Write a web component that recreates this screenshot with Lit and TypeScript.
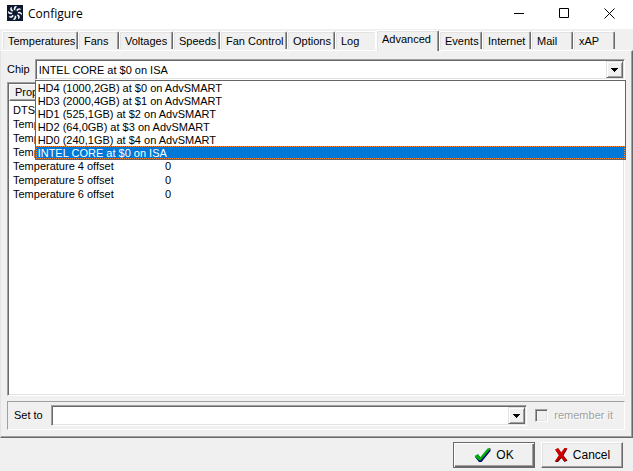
import { LitElement, html, css, svg, nothing } from "lit";
import { customElement, property, state } from "lit/decorators.js";
import { classMap } from "lit/directives/class-map.js";

const TABS: Array<[string, number]> = [
  ["Temperatures", 76],
  ["Fans", 41],
  ["Voltages", 54],
  ["Speeds", 47],
  ["Fan Control", 67],
  ["Options", 48],
  ["Log", 41],
  ["Advanced", 63],
  ["Events", 43],
  ["Internet", 49],
  ["Mail", 42],
  ["xAP", 42],
];

const CHIPS = [
  "HD4 (1000,2GB) at $0 on AdvSMART",
  "HD3 (2000,4GB) at $1 on AdvSMART",
  "HD1 (525,1GB) at $2 on AdvSMART",
  "HD2 (64,0GB) at $3 on AdvSMART",
  "HD0 (240,1GB) at $4 on AdvSMART",
  "INTEL CORE at $0 on ISA",
];

const ROWS: Array<[string, string]> = [
  ["DTS", ""],
  ["Temp", ""],
  ["Temp", ""],
  ["Temp", ""],
  ["Temperature 4 offset", "0"],
  ["Temperature 5 offset", "0"],
  ["Temperature 6 offset", "0"],
];

/** Sunken drop-down with a classic raised arrow button. */
@customElement("combo-box")
export class ComboBox extends LitElement {
  @property() label = "";
  @property({ attribute: false }) options: string[] = [];
  @property() value = "";
  @property({ type: Boolean }) open = false;

  static styles = css`
    :host {
      display: block;
      position: relative;
      flex: 1;
      min-width: 0;
    }
    .field {
      display: flex;
      height: 21px;
      box-sizing: border-box;
      background: #fff;
      border: 1px solid;
      border-color: #a0a0a0 #fff #fff #a0a0a0;
      box-shadow: inset 1px 1px #696969, inset -1px -1px #e3e3e3;
      padding: 1px;
      position: relative;
    }
    select {
      appearance: none;
      flex: 1;
      min-width: 0;
      border: 0;
      margin: 0;
      padding: 1px 18px 0 2px;
      background: none;
      font: inherit;
      color: #000;
      outline: none;
    }
    .arrow {
      position: absolute;
      top: 1px;
      right: 1px;
      bottom: 1px;
      width: 17px;
      box-sizing: border-box;
      background: #f0f0f0;
      border: 1px solid;
      border-color: #e3e3e3 #696969 #696969 #e3e3e3;
      box-shadow: inset 1px 1px #fff, inset -1px -1px #a0a0a0;
      display: flex;
      align-items: center;
      justify-content: center;
      pointer-events: none;
    }
    .list {
      position: absolute;
      z-index: 2;
      top: 100%;
      left: 0;
      right: -1px;
      margin: 0;
      padding: 0;
      list-style: none;
      background: #fff;
      border: 1px solid #646464;
    }
    .item {
      height: 13px;
      line-height: 14px;
      padding: 0 2px;
      white-space: nowrap;
    }
    .item.current {
      background: #0078d7;
      color: #fff;
      outline: 1px dotted #ff8728;
      outline-offset: -1px;
    }
  `;

  render() {
    return html`
      <div class="field">
        <select aria-label=${this.label}>
          ${this.options.map((o) => html`<option ?selected=${o === this.value}>${o}</option>`)}
        </select>
        <span class="arrow">
          <svg width="7" height="4" viewBox="0 0 7 4" shape-rendering="crispEdges">
            <path d="M0 0h7v1H6v1H5v1H4v1H3V3H2V2H1V1H0z" />
          </svg>
        </span>
      </div>
      ${this.open
        ? html`<ul class="list" role="listbox" aria-label=${this.label}>
            ${this.options.map(
              (o) => html`<li
                role="option"
                aria-selected=${o === this.value}
                class=${classMap({ item: true, current: o === this.value })}
                @click=${() => {
                  this.value = o;
                  this.open = false;
                }}
              >${o}</li>`
            )}
          </ul>`
        : nothing}
    `;
  }
}

const blades = [0, 45, 90, 135, 180, 225, 270, 315].map(
  (a) => svg`<path d="M7.200 5.200C6.200 4 6.500 2.400 8.200 1L10.200 1.400C8.400 2.600 8.200 4 8.400 5.200z" transform="rotate(${a} 8 8)" />`
);

@customElement("app-root")
export class AppRoot extends LitElement {
  @state() private active = "Advanced";

  static styles = css`
    :host {
      display: flex;
      flex-direction: column;
      min-height: 100vh;
      box-sizing: border-box;
      background: #f0f0f0;
      color: #000;
      font: 11px/13px "Liberation Sans", Arial, sans-serif;
    }
    button {
      font: inherit;
      color: inherit;
      margin: 0;
      padding: 0;
      border: 0;
      background: none;
    }
    .titlebar {
      display: flex;
      height: 29px;
      background: #fff;
      padding: 0 1px 0 7px;
    }
    .logo {
      margin-top: 5px;
    }
    .title {
      flex: 1;
      margin: 0 0 0 5px;
      font: 12px/28px "Open Sans", "Noto Sans", sans-serif;
    }
    .winbtn {
      width: 45px;
      height: 26px;
      display: flex;
      align-items: center;
      justify-content: center;
    }
    .winbtn svg {
      fill: none;
      stroke: #000;
    }
    .tabs {
      display: flex;
      align-items: flex-end;
      height: 21px;
      padding-left: 2px;
    }
    .tab {
      flex: none;
      height: 18px;
      box-sizing: border-box;
      padding: 1px 0 0 5px;
      text-align: left;
      white-space: nowrap;
      border: 1px solid;
      border-color: #fff #696969 transparent #fff;
      border-bottom: 0;
      border-radius: 2px 2px 0 0;
      box-shadow: inset -1px 0 #a0a0a0, inset 1px 1px #e3e3e3;
      margin-bottom: 1px;
    }
    .tab.before {
      border-right-color: #fff;
      box-shadow: inset 1px 1px #e3e3e3;
    }
    .tab.active {
      height: 21px;
      margin-bottom: -1px;
      padding: 0 0 4px 5px;
      background: #f0f0f0;
      position: relative;
    }
    .page {
      flex: 1;
      display: flex;
      flex-direction: column;
      border: 1px solid;
      border-color: #fff #696969 #696969 #e3e3e3;
      box-shadow: inset -1px -1px #a0a0a0;
      padding: 8px 7px 7px 6px;
    }
    .chip {
      display: flex;
      align-items: center;
      gap: 5px;
    }
    .properties {
      flex: 1;
      margin-top: 2px;
      background: #fff;
      border: 1px solid;
      border-color: #a0a0a0 #fff #fff #a0a0a0;
      box-shadow: inset 1px 1px #696969, inset -1px -1px #e3e3e3;
      padding: 1px;
    }
    table {
      width: 100%;
      table-layout: fixed;
      border-collapse: separate;
      border-spacing: 0;
    }
    .name {
      width: 152px;
    }
    th {
      height: 17px;
      box-sizing: border-box;
      padding: 0 5px;
      text-align: left;
      font-weight: normal;
      background: #f0f0f0;
      border: 1px solid;
      border-color: #fff #696969 #696969 #fff;
      box-shadow: inset -1px -1px #a0a0a0;
    }
    td {
      height: 14px;
      line-height: 14px;
      padding: 0 4px;
    }
    tbody::before {
      content: "";
      display: block;
      height: 2px;
    }
    .setter {
      display: flex;
      align-items: center;
      gap: 8px;
      margin-top: 5px;
      padding: 3px 6px;
      border: 1px solid;
      border-color: #a0a0a0 #fff #fff #a0a0a0;
    }
    .remember {
      display: flex;
      align-items: center;
      gap: 6px;
      padding-right: 5px;
      color: #a0a0a0;
      text-shadow: 1px 1px #fff;
    }
    .check {
      appearance: none;
      width: 13px;
      height: 13px;
      margin: 0;
      background: #f0f0f0;
      border: 1px solid;
      border-color: #a0a0a0 #fff #fff #a0a0a0;
      box-shadow: inset 1px 1px #696969, inset -1px -1px #e3e3e3;
    }
    .footer {
      display: flex;
      justify-content: flex-end;
      gap: 6px;
      padding: 4px 10px 3px;
    }
    .push {
      display: flex;
      align-items: center;
      justify-content: center;
      gap: 5px;
      width: 82px;
      height: 26px;
      font-size: 12px;
      border: 1px solid;
      border-color: #fff #696969 #696969 #fff;
      box-shadow: inset -1px -1px #a0a0a0, inset 1px 1px #e3e3e3;
    }
    .push.default {
      border-color: #696969;
      box-shadow: inset 1px 1px #fff, inset -1px -1px #696969, inset -2px -2px #a0a0a0;
    }
  `;

  private renderTab([name, width]: [string, number], index: number) {
    const next = TABS[index + 1];
    const classes = {
      tab: true,
      active: name === this.active,
      before: !!next && next[0] === this.active,
    };
    return html`<button
      role="tab"
      aria-selected=${name === this.active}
      class=${classMap(classes)}
      style="width:${width}px"
      @click=${() => (this.active = name)}
    >${name}</button>`;
  }

  render() {
    return html`
      <header class="titlebar">
        <svg class="logo" width="16" height="16" viewBox="0 0 16 16">
          <rect width="16" height="16" fill="#0c1830" />
          <g fill="#eef2f4">${blades}</g>
        </svg>
        <h1 class="title">Configure</h1>
        <button class="winbtn" aria-label="Minimize">
          <svg width="11" height="11"><path d="M0 5.5h10" /></svg>
        </button>
        <button class="winbtn" aria-label="Maximize">
          <svg width="11" height="11"><path d="M.5 .5h9v9h-9z" /></svg>
        </button>
        <button class="winbtn" aria-label="Close">
          <svg width="11" height="11"><path d="M.5 .5l10 10M10.5 .5l-10 10" /></svg>
        </button>
      </header>

      <nav class="tabs" role="tablist">${TABS.map((t, i) => this.renderTab(t, i))}</nav>

      <main class="page">
        <div class="chip">
          <span>Chip</span>
          <combo-box label="Chip" .options=${CHIPS} value=${CHIPS[5]} open></combo-box>
        </div>

        <div class="properties">
          <table>
            <thead>
              <tr><th class="name">Prop</th><th></th></tr>
            </thead>
            <tbody>
              ${ROWS.map(([n, v]) => html`<tr><td>${n}</td><td>${v}</td></tr>`)}
            </tbody>
          </table>
        </div>

        <div class="setter">
          <span>Set to</span>
          <combo-box label="Set to"></combo-box>
          <label class="remember">
            <input class="check" type="checkbox" disabled />remember it
          </label>
        </div>
      </main>

      <footer class="footer">
        <button class="push default">
          <svg width="17" height="16" viewBox="0 0 17 16">
            <path d="M1 10l3-2.500 2.500 3L14 2l2.500-.5V4L7.500 15H5z" fill="#000070" />
            <path d="M.5 9l3.500-2 2 3.500L13.500 1.500 16 1v1.500L6.500 13.500H5z" fill="#00b010" />
          </svg>
          OK
        </button>
        <button class="push">
          <svg width="14" height="16" viewBox="0 0 14 16">
            <path d="M1.500 3l3-1.500L7.500 6 11 1.500h2.500L9.500 8.500l4 5-3 1.500-3-4L4 15H1l4-6.500z" fill="#500000" />
            <path d="M1 2.500L4 1l3 4.500L10.500 1H13L9 8l3.500 5-2.500 1L7 10 3.500 14H1l4-6z" fill="#d00000" />
          </svg>
          Cancel
        </button>
      </footer>
    `;
  }
}
